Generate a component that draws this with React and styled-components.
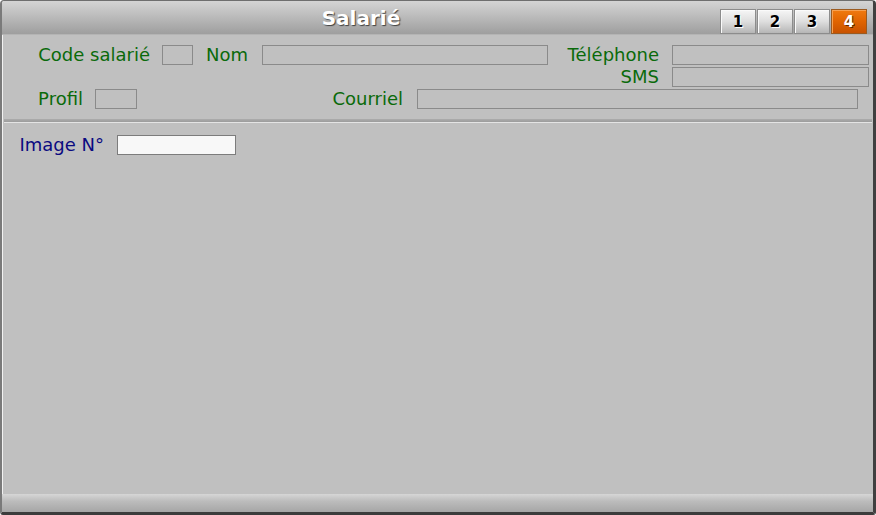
import React from 'react';
import styled, { createGlobalStyle } from 'styled-components';

const GlobalStyle = createGlobalStyle`
  html, body {
    margin: 0;
    padding: 0;
    background: #ffffff;
  }
  * {
    box-sizing: border-box;
  }
`;

const Window = styled.div`
  width: 876px;
  height: 515px;
  display: flex;
  flex-direction: column;
  background: #c0c0c0;
  border-top: 1px solid #6e6e6e;
  border-left: 2px solid #7a7a7a;
  border-right: 3px solid #404040;
  border-bottom: 3px solid #3c3c3c;
  border-radius: 4px 4px 3px 3px;
  box-shadow: inset 1px 0 0 #f2f2f2;
  font-family: 'DejaVu Sans', Verdana, sans-serif;
  overflow: hidden;
`;

const TitleBar = styled.div`
  height: 34px;
  display: flex;
  align-items: flex-start;
  background: linear-gradient(#d4d4d4, #bcbcbc 45%, #9e9e9e);
  border-bottom: 1px solid #b4b4b4;
`;

const Title = styled.div`
  flex: 1;
  text-align: center;
  font-weight: bold;
  font-size: 20px;
  line-height: 34px;
  color: #ffffff;
  text-shadow: 1px 1px 1px #404040;
`;

const Tabs = styled.div`
  display: flex;
  gap: 1px;
  padding-top: 8px;
  margin-right: 6px;
`;

const Tab = styled.div`
  width: 36px;
  height: 25px;
  display: flex;
  align-items: center;
  justify-content: center;
  font-weight: bold;
  font-size: 15px;
  border: 1px solid ${({ $active }) => ($active ? '#9a5a20' : '#8c8c8c')};
  box-shadow: inset 1px 1px 0 ${({ $active }) => ($active ? '#f6a050' : '#fafafa')};
  background: ${({ $active }) =>
    $active
      ? 'linear-gradient(#f07a10, #e06400 50%, #c85200)'
      : 'linear-gradient(#f6f6f6, #dedede 50%, #b6b6b6)'};
  color: ${({ $active }) => ($active ? '#ffffff' : '#000000')};
  text-shadow: ${({ $active }) => ($active ? '1px 1px 0 #5a2a00' : '1px 1px 0 #ffffff')};
`;

const Header = styled.div`
  display: flex;
  flex-direction: column;
  gap: 2px;
  padding: 10px 0 10px;
`;

const Row = styled.div`
  display: flex;
  align-items: center;
  height: 20px;
`;

const Label = styled.div`
  width: ${({ $w }) => $w}px;
  margin-right: ${({ $gap }) => $gap || 12}px;
  text-align: right;
  font-size: 18px;
  line-height: 20px;
  white-space: nowrap;
  color: ${({ $navy }) => ($navy ? '#0a0a80' : '#0a6a0a')};
`;

const Input = styled.div`
  width: ${({ $w }) => $w}px;
  height: 20px;
  border: 1px solid ${({ $white }) => ($white ? '#7c7c7c' : '#8a8a8a')};
  background: ${({ $white }) => ($white ? '#f8f8f8' : 'transparent')};
`;

const Separator = styled.div`
  margin: 0 1px 0 2px;
  height: 4px;
  background: linear-gradient(#acacac, #9c9c9c 75%, #e4e4e4 75%);
`;

const Content = styled.div`
  flex: 1;
  padding: 12px 0 0 0;
`;

const Footer = styled.div`
  height: 18px;
  background: linear-gradient(#d6d6d6, #bcbcbc 40%, #a6a6a6);
`;

const App = () => (
  <>
    <GlobalStyle />
    <Window>
      <TitleBar>
        <Title>Salarié</Title>
        <Tabs>
          <Tab>1</Tab>
          <Tab>2</Tab>
          <Tab>3</Tab>
          <Tab $active>4</Tab>
        </Tabs>
      </TitleBar>
      <Header>
        <Row>
          <Label $w={148}>Code salarié</Label>
          <Input $w={31} />
          <Label $w={55} $gap={14}>Nom</Label>
          <Input $w={286} />
          <Label $w={111} $gap={13}>Téléphone</Label>
          <Input $w={197} />
        </Row>
        <Row>
          <Label $w={657} $gap={13}>SMS</Label>
          <Input $w={197} />
        </Row>
        <Row>
          <Label $w={81}>Profil</Label>
          <Input $w={42} />
          <Label $w={266} $gap={14}>Courriel</Label>
          <Input $w={441} />
        </Row>
      </Header>
      <Separator />
      <Content>
        <Row>
          <Label $w={102} $gap={13} $navy>Image N°</Label>
          <Input $w={119} $white />
        </Row>
      </Content>
      <Footer />
    </Window>
  </>
);

export default App;
